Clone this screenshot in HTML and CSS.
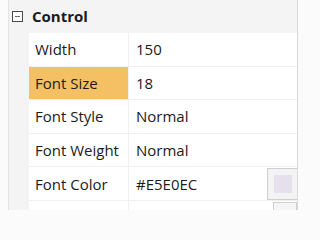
FILE: index.html
```html
<!DOCTYPE html>
<html>
<head>
<meta charset="utf-8">
<link rel="stylesheet" href="styles.css">
</head>
<body>
<div class="panel">
  <div class="grid">
    <div class="header">
      <span class="toggle"><span class="minus"></span></span>
      <span class="title">Control</span>
    </div>
    <div class="row">
      <div class="label">Width</div>
      <div class="value">150</div>
    </div>
    <div class="row selected">
      <div class="label">Font Size</div>
      <div class="value">18</div>
    </div>
    <div class="row">
      <div class="label">Font Style</div>
      <div class="value">Normal</div>
    </div>
    <div class="row">
      <div class="label">Font Weight</div>
      <div class="value">Normal</div>
    </div>
    <div class="row">
      <div class="label">Font Color</div>
      <div class="value">#E5E0EC</div>
      <div class="swatch-btn"><span class="swatch"></span></div>
    </div>
    <div class="row">
      <div class="label"></div>
      <div class="value"></div>
      <div class="next-btn"></div>
    </div>
  </div>
</div>
</body>
</html>
```
FILE: styles.css
```css
html, body {
  margin: 0;
  padding: 0;
  background: #fbfbfb;
  width: 302px;
  height: 210px;
  overflow: hidden;
}
.panel {
  padding-left: 8px;
  height: 210px;
  box-sizing: border-box;
}
.grid {
  border-left: 1px solid #e2e2e2;
  border-right: 1px solid #d9d9d9;
  width: 288px;
  height: 210px;
  background: #f4f4f4;
  font-family: "Open Sans", "Noto Sans", sans-serif;
  color: #1b1b1b;
  overflow: hidden;
}
.header {
  height: 33px;
  display: flex;
  align-items: center;
  box-sizing: border-box;
}
.toggle {
  width: 9px;
  height: 9px;
  border: 1px solid #4a4a4a;
  margin-left: 3px;
  margin-right: 9px;
  display: flex;
  align-items: center;
  justify-content: center;
  background: #fdfdfd;
}
.minus {
  width: 5px;
  height: 1px;
  background: #6a6a6a;
}
.title {
  font-weight: 700;
  font-size: 15px;
  padding-bottom: 1px;
}
.row {
  position: relative;
  display: flex;
  margin-left: 20px;
  height: 32.6px;
  border-bottom: 1px solid #f0f0f0;
  background: #ffffff;
  font-size: 15px;
}
.label {
  width: 93px;
  padding-left: 6px;
  border-right: 1px solid #f0f0f0;
  display: flex;
  align-items: center;
  white-space: nowrap;
}
.value {
  flex: 1;
  padding-left: 7px;
  display: flex;
  align-items: center;
}
.selected .label {
  background: #f5c063;
}
.swatch-btn {
  position: absolute;
  right: -1px;
  top: 1px;
  width: 29px;
  height: 30px;
  border: 1px solid #cfcfcf;
  background: #f3f3f3;
  display: flex;
  align-items: center;
  justify-content: center;
}
.swatch {
  width: 18px;
  height: 18px;
  background: #e5e0ec;
}
.next-btn {
  position: absolute;
  right: 0;
  top: 1px;
  width: 22px;
  height: 30px;
  border: 1px solid #cfcfcf;
  background: #f5f5f5;
}
```
